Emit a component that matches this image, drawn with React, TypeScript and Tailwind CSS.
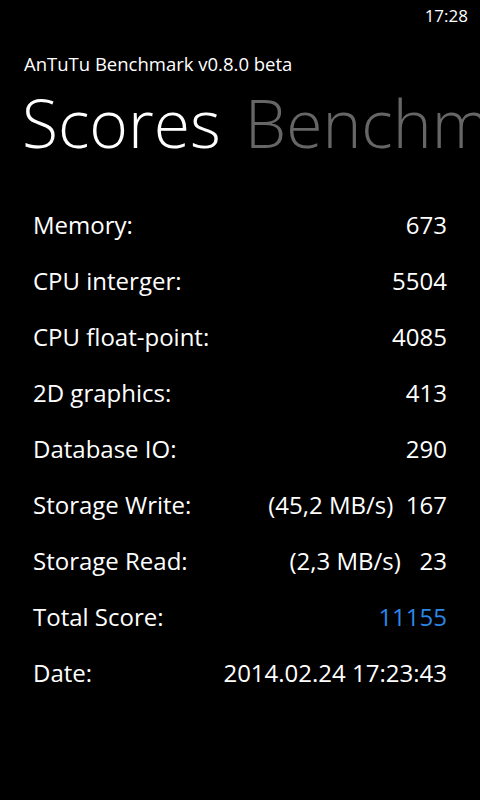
export default function App() {
  const rows: { label: string; value: string; blue?: boolean }[] = [
    { label: "Memory:", value: "673" },
    { label: "CPU interger:", value: "5504" },
    { label: "CPU float-point:", value: "4085" },
    { label: "2D graphics:", value: "413" },
    { label: "Database IO:", value: "290" },
    { label: "Storage Write:", value: "(45,2 MB/s)  167" },
    { label: "Storage Read:", value: "(2,3 MB/s)   23" },
    { label: "Total Score:", value: "11155", blue: true },
    { label: "Date:", value: "2014.02.24 17:23:43" },
  ]

  return (
    <div
      className="w-[480px] h-[800px] bg-black text-white overflow-hidden"
      style={{ fontFamily: '"Open Sans", "Noto Sans", sans-serif' }}
    >
      {/* Status bar */}
      <div className="h-[32px] flex items-center justify-end pr-[12px] text-[17px]">
        <span>17:28</span>
      </div>

      {/* App title */}
      <div className="pl-[24px] pt-[20px] text-[18.5px] leading-[24px] whitespace-nowrap">AnTuTu Benchmark v0.8.0 beta</div>

      {/* Pivot headers */}
      <div className="pl-[22px] mt-[6px] flex gap-[24px] whitespace-nowrap text-[66px] font-light leading-[80px]">
        <span>Scores</span>
        <span className="text-[#666666]">Benchmark</span>
      </div>

      {/* Score rows */}
      <div className="mt-[35px] pl-[33px] pr-[33px] flex flex-col">
        {rows.map((r) => (
          <div key={r.label} className="h-[56px] flex items-center justify-between text-[24px] whitespace-nowrap">
            <span>{r.label}</span>
            <span className={"whitespace-pre " + (r.blue ? "text-[#2c87e8]" : "")}>{r.value}</span>
          </div>
        ))}
      </div>
    </div>
  )
}
